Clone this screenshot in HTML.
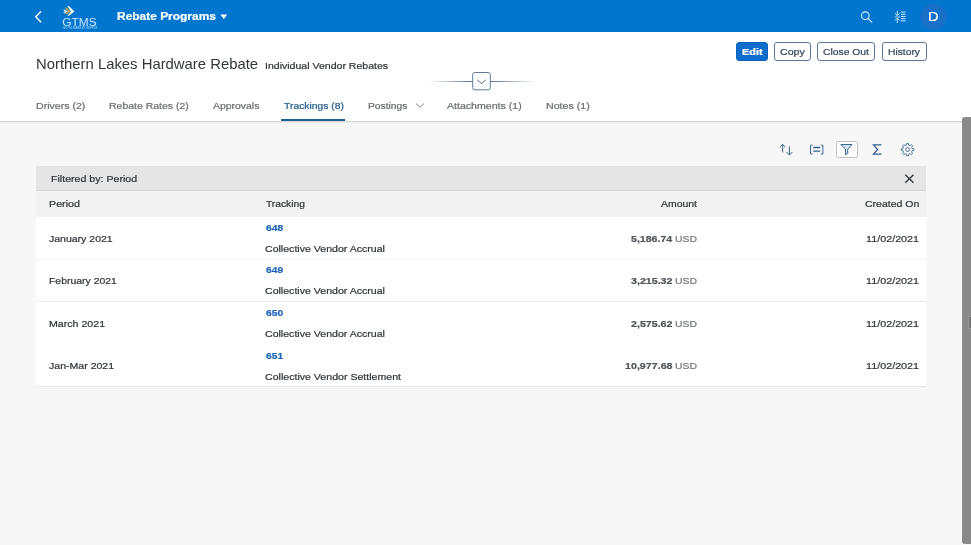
<!DOCTYPE html>
<html lang="en">
<head>
<meta charset="utf-8">
<title>Rebate Programs</title>
<style>
html,body{margin:0;padding:0;}
body{width:971px;height:545px;overflow:hidden;position:relative;background:#f7f7f7;font-family:"Liberation Sans",sans-serif;}
#root{position:absolute;left:0;top:0;width:971px;height:545px;overflow:hidden;will-change:transform;}
.abs{position:absolute;}
.t{position:absolute;white-space:nowrap;line-height:1;font-family:"Liberation Sans",sans-serif;transform-origin:0 0;-webkit-text-stroke:0.22px currentColor;}
#shell{left:0;top:0;width:971px;height:32.2px;background:#0076cf;}
#objhdr{left:0;top:32px;width:971px;height:88.5px;background:#ffffff;}
#hdrline{left:0;top:120.5px;width:971px;height:1px;background:#d9d9d9;}
#hdrshadow{left:0;top:121.5px;width:971px;height:2px;background:linear-gradient(#ececec,#f7f7f7);}
.btn{position:absolute;top:42px;height:19.4px;box-sizing:border-box;border:1px solid #5b7896;border-radius:3px;background:#ffffff;}
#b-edit{left:736.2px;width:32px;background:#0f6dcb;border-color:#0b63bd;}
#b-copy{left:774px;width:36.8px;}
#b-close{left:817.2px;width:58.2px;}
#b-hist{left:881.8px;width:45.1px;}
#tabsel{left:281px;top:119px;width:64.3px;height:2px;background:#20608f;}
#fbar{left:36.3px;top:166px;width:889.5px;height:24.3px;background:#e5e5e5;}
#fbarline{left:36.3px;top:190px;width:889.5px;height:0.7px;background:#d4d4d4;}
#thead{left:36.3px;top:191px;width:889.5px;height:25.6px;background:#f2f2f2;}
#tbody{left:36.3px;top:216.6px;width:889.5px;height:170px;background:#ffffff;}
.rl{position:absolute;left:36.3px;width:889.5px;height:1px;background:#ebebeb;}
#tbot{left:36.3px;top:386.4px;width:889.5px;height:1px;background:#e9e9e9;}
#fbtn{left:836.3px;top:141.2px;width:21.4px;height:16.4px;box-sizing:border-box;border:1px solid #c4c4c4;border-radius:2px;background:#fcfcfc;}
#sbthumb{left:962px;top:117px;width:10px;height:427px;background:#8a8a8a;border-radius:3px 0 0 3px;}
#sbmark{left:968px;top:316px;width:3px;height:13px;background:#747474;box-sizing:border-box;border:1px solid #979797;border-right:0;}
svg{position:absolute;overflow:visible;}
</style>
</head>
<body>
<div id="root">
<div class="abs" id="shell"></div>
<div class="abs" id="objhdr"></div>
<div class="abs" id="hdrline"></div>
<div class="abs" id="hdrshadow"></div>

<!-- shell icons -->
<svg id="shellsvg" width="971" height="32" style="left:0;top:0" viewBox="0 0 971 32">
  <!-- back chevron -->
  <path d="M40.6 11.7 L35.8 16.7 L40.6 21.7" fill="none" stroke="#ffffff" stroke-width="1.5" stroke-linecap="round" stroke-linejoin="round"/>
  <!-- logo -->
  <g>
    <path d="M63.2 10 L64.8 9.4 L67.6 11.6 L64.8 13.4 L63.2 12.6 L65 11.4 Z" fill="#ffffff" opacity="0.9"/>
    <path d="M64.8 7.6 L67 7.8 L70.6 11.5 L67 13.9 L64.8 13.9 L67.8 11.4 Z" fill="#c9a24a"/>
    <path d="M67.2 6 L69.4 6.4 L74.5 11.6 L69.2 15.6 L67.2 16 L71 11.5 Z" fill="#ffffff"/>
    <text x="62.3" y="25.9" font-family="Liberation Sans, sans-serif" font-size="11" fill="#cde6fb" textLength="34.4" lengthAdjust="spacingAndGlyphs">GTMS</text>
    <text x="63" y="29" font-family="Liberation Sans, sans-serif" font-size="2.7" font-weight="700" fill="#8cc4f4" textLength="34.4" lengthAdjust="spacingAndGlyphs">GO TO MARKET SUPPLY</text>
  </g>
  <!-- dropdown triangle -->
  <path d="M220.4 14.6 L227.2 14.6 L223.8 19 Z" fill="#ffffff"/>
  <!-- search -->
  <circle cx="865.3" cy="15.7" r="3.8" fill="none" stroke="#dff0ff" stroke-width="1.1"/>
  <path d="M868.1 18.6 L871.8 22.1" stroke="#dff0ff" stroke-width="1.25" stroke-linecap="round"/>
  <!-- collapse-list icon -->
  <g stroke="#dff0ff" fill="none" stroke-linecap="butt" stroke-linejoin="miter">
    <path d="M900.9 12.1 H905.6 M900.9 14.3 H905.6 M900.9 16.5 H905.6 M900.9 18.7 H905.6 M900.9 20.9 H905.6" stroke-width="0.9"/>
    <path d="M897.3 10.9 V15.4 M894.9 13.3 L897.3 15.7 L899.7 13.3" stroke-width="0.9"/>
    <path d="M897.3 23 V18.5 M894.9 20.6 L897.3 18.2 L899.7 20.6" stroke-width="0.9"/>
    <path d="M894.6 17 H900" stroke-width="0.8"/>
  </g>
  <!-- avatar -->
  <circle cx="933.5" cy="16.7" r="13.1" fill="#1870c9"/>
</svg>

<!-- buttons -->
<div class="btn" id="b-edit"></div>
<div class="btn" id="b-copy"></div>
<div class="btn" id="b-close"></div>
<div class="btn" id="b-hist"></div>

<!-- header collapse control -->
<svg width="971" height="100" style="left:0;top:32px" viewBox="0 32 971 100">
  <defs>
    <linearGradient id="gl" x1="0" x2="1" y1="0" y2="0"><stop offset="0" stop-color="#4f6f92" stop-opacity="0"/><stop offset="1" stop-color="#3f5f85" stop-opacity="1"/></linearGradient>
    <linearGradient id="gr" x1="0" x2="1" y1="0" y2="0"><stop offset="0" stop-color="#3f5f85" stop-opacity="1"/><stop offset="1" stop-color="#4f6f92" stop-opacity="0"/></linearGradient>
  </defs>
  <rect x="428" y="81" width="44.6" height="0.9" fill="url(#gl)"/>
  <rect x="490.4" y="81" width="47" height="0.9" fill="url(#gr)"/>
  <rect x="472.7" y="72.5" width="17.6" height="17.3" rx="2.2" ry="2.2" fill="#ffffff" stroke="#4f6c8c" stroke-width="0.9"/>
  <path d="M477.5 80.1 L481.5 83.5 L485.5 80.1" fill="none" stroke="#3f5876" stroke-width="0.9" stroke-linecap="round" stroke-linejoin="round"/>
  <!-- postings chevron -->
  <path d="M416.2 103.8 L419.9 107.2 L423.6 103.8" fill="none" stroke="#6a6d70" stroke-width="0.8" stroke-linecap="round" stroke-linejoin="round"/>
</svg>
<div class="abs" id="tabsel"></div>

<!-- toolbar -->
<div class="abs" id="fbtn"></div>
<svg width="971" height="40" style="left:0;top:130px" viewBox="0 130 971 40">
  <g fill="none" stroke="#33608f" stroke-width="0.95" stroke-linecap="round" stroke-linejoin="round">
    <!-- sort -->
    <path d="M782.7 152 V144.6 M780.2 147 L782.7 144.4 L785.2 147"/>
    <path d="M789.4 146.8 V154.8 M786.9 152.4 L789.4 155 L791.9 152.4"/>
    <!-- group -->
    <path d="M812.2 145.2 H810.5 V154 H812.2 M821.2 145.2 H822.9 V154 H821.2"/>
    <path d="M813.3 147.5 H820.2 M813.3 151.2 H820.2" stroke-width="1.3" stroke-linecap="butt"/>
    <!-- filter -->
    <path d="M841.2 144.5 H852 L847.7 149.4 V153.4 L845.5 154.8 V149.4 Z" fill="#d3e6f7"/>
    <!-- sigma -->
    <path d="M880.7 145.6 V144.9 H873.5 L877.5 149.5 L873.5 154.1 H880.9 V153.4" stroke-width="1.25" stroke-linejoin="miter" stroke-linecap="butt"/>
  </g>
  <!-- gear -->
  <g fill="none" stroke="#33608f" stroke-width="0.85">
    <circle cx="907.6" cy="149.6" r="1.9"/>
    <path d="M906.50 145.03 L906.76 143.36 L908.44 143.36 L908.70 145.03 L910.06 145.59 L911.42 144.59 L912.61 145.78 L911.61 147.14 L912.17 148.50 L913.84 148.76 L913.84 150.44 L912.17 150.70 L911.61 152.06 L912.61 153.42 L911.42 154.61 L910.06 153.61 L908.70 154.17 L908.44 155.84 L906.76 155.84 L906.50 154.17 L905.14 153.61 L903.78 154.61 L902.59 153.42 L903.59 152.06 L903.03 150.70 L901.36 150.44 L901.36 148.76 L903.03 148.50 L903.59 147.14 L902.59 145.78 L903.78 144.59 L905.14 145.59 Z" stroke-linejoin="round"/>
  </g>
</svg>

<!-- table -->
<div class="abs" id="fbar"></div>
<div class="abs" id="thead"></div>
<div class="abs" id="tbody"></div>
<div class="abs" id="fbarline"></div>
<div class="rl" style="top:259px;background:#f3f3f3"></div>
<div class="rl" style="top:301px;background:#eaeaea"></div>
<div class="abs" id="tbot"></div>

<svg width="20" height="20" style="left:900px;top:169px" viewBox="900 169 20 20">
  <path d="M905.3 174.7 L913.5 182.7 M913.5 174.7 L905.3 182.7" stroke="#32363a" stroke-width="1.35" stroke-linecap="butt"/>
</svg>

<!-- scrollbar -->
<div class="abs" id="sbthumb"></div>
<div class="abs" id="sbmark"></div>

<span class="t" style="left:116.76px;top:11px;font-size:11.1px;font-weight:700;color:#ffffff;transform:scaleX(1.0769);">Rebate Programs</span>
<span class="t" style="left:927.86px;top:10px;font-size:13px;font-weight:400;color:#ffffff;transform:scaleX(1.1355);">D</span>
<span class="t" style="left:36.18px;top:57px;font-size:14.6px;font-weight:400;color:#32363a;transform:scaleX(1.0176);-webkit-text-stroke:0;">Northern Lakes Hardware Rebate</span>
<span class="t" style="left:264.66px;top:61px;font-size:9.44px;font-weight:400;color:#32363a;transform:scaleX(1.1193);">Individual Vendor Rebates</span>
<span class="t" style="left:741.92px;top:47px;font-size:9.44px;font-weight:700;color:#ffffff;transform:scaleX(1.1536);">Edit</span>
<span class="t" style="left:780.24px;top:47px;font-size:9.44px;font-weight:400;color:#354a5f;transform:scaleX(1.1256);">Copy</span>
<span class="t" style="left:823.05px;top:47px;font-size:9.44px;font-weight:400;color:#354a5f;transform:scaleX(1.0964);">Close Out</span>
<span class="t" style="left:887.95px;top:47px;font-size:9.44px;font-weight:400;color:#354a5f;transform:scaleX(1.0922);">History</span>
<span class="t" style="left:36.14px;top:101px;font-size:9.44px;font-weight:400;color:#6a6d70;transform:scaleX(1.1209);">Drivers (2)</span>
<span class="t" style="left:109.04px;top:101px;font-size:9.44px;font-weight:400;color:#6a6d70;transform:scaleX(1.1110);">Rebate Rates (2)</span>
<span class="t" style="left:212.90px;top:101px;font-size:9.44px;font-weight:400;color:#6a6d70;transform:scaleX(1.1066);">Approvals</span>
<span class="t" style="left:283.83px;top:101px;font-size:9.44px;font-weight:400;color:#215d8d;transform:scaleX(1.0981);">Trackings (8)</span>
<span class="t" style="left:367.56px;top:101px;font-size:9.44px;font-weight:400;color:#6a6d70;transform:scaleX(1.0873);">Postings</span>
<span class="t" style="left:447.30px;top:101px;font-size:9.44px;font-weight:400;color:#6a6d70;transform:scaleX(1.1227);">Attachments (1)</span>
<span class="t" style="left:545.63px;top:101px;font-size:9.44px;font-weight:400;color:#6a6d70;transform:scaleX(1.1311);">Notes (1)</span>
<span class="t" style="left:51.44px;top:174px;font-size:9.44px;font-weight:400;color:#32363a;transform:scaleX(1.1272);">Filtered by: Period</span>
<span class="t" style="left:49.03px;top:199px;font-size:9.44px;font-weight:400;color:#32363a;transform:scaleX(1.1352);">Period</span>
<span class="t" style="left:265.63px;top:199px;font-size:9.44px;font-weight:400;color:#32363a;transform:scaleX(1.0865);">Tracking</span>
<span class="t" style="left:660.80px;top:199px;font-size:9.44px;font-weight:400;color:#32363a;transform:scaleX(1.1077);">Amount</span>
<span class="t" style="left:864.54px;top:199px;font-size:9.44px;font-weight:400;color:#32363a;transform:scaleX(1.1141);">Created On</span>
<span class="t" style="left:49.42px;top:234px;font-size:9.44px;font-weight:400;color:#32363a;transform:scaleX(1.1150);">January 2021</span>
<span class="t" style="left:265.64px;top:223px;font-size:9.9px;font-weight:700;color:#1e66b8;transform:scaleX(1.0375);">648</span>
<span class="t" style="left:265.34px;top:244px;font-size:9.44px;font-weight:400;color:#32363a;transform:scaleX(1.1226);">Collective Vendor Accrual</span>
<span class="t" style="left:631.23px;top:234px;font-size:9.9px;font-weight:700;color:#515559;transform:scaleX(1.0719);">5,186.74</span>
<span class="t" style="left:675.25px;top:234px;font-size:9.44px;font-weight:400;color:#74777a;transform:scaleX(1.1053);">USD</span>
<span class="t" style="left:865.74px;top:234px;font-size:9.44px;font-weight:400;color:#32363a;transform:scaleX(1.1425);">11/02/2021</span>
<span class="t" style="left:49.15px;top:276px;font-size:9.44px;font-weight:400;color:#32363a;transform:scaleX(1.1074);">February 2021</span>
<span class="t" style="left:265.64px;top:265px;font-size:9.9px;font-weight:700;color:#1e66b8;transform:scaleX(1.0375);">649</span>
<span class="t" style="left:265.34px;top:286px;font-size:9.44px;font-weight:400;color:#32363a;transform:scaleX(1.1226);">Collective Vendor Accrual</span>
<span class="t" style="left:631.23px;top:276px;font-size:9.9px;font-weight:700;color:#515559;transform:scaleX(1.0789);">3,215.32</span>
<span class="t" style="left:675.25px;top:276px;font-size:9.44px;font-weight:400;color:#74777a;transform:scaleX(1.1053);">USD</span>
<span class="t" style="left:865.74px;top:276px;font-size:9.44px;font-weight:400;color:#32363a;transform:scaleX(1.1425);">11/02/2021</span>
<span class="t" style="left:49.14px;top:319px;font-size:9.44px;font-weight:400;color:#32363a;transform:scaleX(1.1262);">March 2021</span>
<span class="t" style="left:265.64px;top:308px;font-size:9.9px;font-weight:700;color:#1e66b8;transform:scaleX(1.0375);">650</span>
<span class="t" style="left:265.34px;top:329px;font-size:9.44px;font-weight:400;color:#32363a;transform:scaleX(1.1226);">Collective Vendor Accrual</span>
<span class="t" style="left:631.23px;top:319px;font-size:9.9px;font-weight:700;color:#515559;transform:scaleX(1.0789);">2,575.62</span>
<span class="t" style="left:675.25px;top:319px;font-size:9.44px;font-weight:400;color:#74777a;transform:scaleX(1.1053);">USD</span>
<span class="t" style="left:865.74px;top:319px;font-size:9.44px;font-weight:400;color:#32363a;transform:scaleX(1.1425);">11/02/2021</span>
<span class="t" style="left:49.42px;top:361px;font-size:9.44px;font-weight:400;color:#32363a;transform:scaleX(1.1200);">Jan-Mar 2021</span>
<span class="t" style="left:265.64px;top:351px;font-size:9.9px;font-weight:700;color:#1e66b8;transform:scaleX(1.0375);">651</span>
<span class="t" style="left:265.34px;top:372px;font-size:9.44px;font-weight:400;color:#32363a;transform:scaleX(1.1245);">Collective Vendor Settlement</span>
<span class="t" style="left:625.16px;top:361px;font-size:9.9px;font-weight:700;color:#515559;transform:scaleX(1.0821);">10,977.68</span>
<span class="t" style="left:675.25px;top:361px;font-size:9.44px;font-weight:400;color:#74777a;transform:scaleX(1.1053);">USD</span>
<span class="t" style="left:865.74px;top:361px;font-size:9.44px;font-weight:400;color:#32363a;transform:scaleX(1.1425);">11/02/2021</span>
</div>
</body>
</html>
